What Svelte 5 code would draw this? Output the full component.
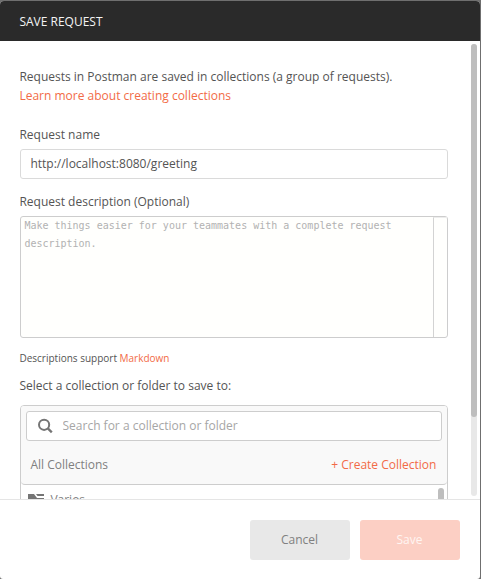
<script>
  let name = $state('http://localhost:8080/greeting');
  let search = $state('');
</script>

<div class="backdrop">
  <div class="modal">
    <header>SAVE REQUEST</header>
    <div class="body">
      <div class="content">
        <p class="intro">Requests in Postman are saved in collections (a group of requests).<br /><span class="link">Learn more about creating collections</span></p>
        <label for="name" class="label">Request name</label>
        <input id="name" class="name" bind:value={name} />
        <div class="label desc-label">Request description (Optional)</div>
        <div class="editor">
          <div class="editor-text">Make things easier for your teammates with a complete request description.</div>
          <div class="gutter"></div>
        </div>
        <p class="hint">Descriptions support <span class="link">Markdown</span></p>
        <div class="label select-label">Select a collection or folder to save to:</div>
        <div class="picker">
          <div class="picker-head">
            <div class="search">
              <svg width="16" height="16" viewBox="0 0 16 16" fill="none" stroke="#757575" stroke-width="2"><circle cx="6.1" cy="6.8" r="5.1" /><path d="M9.8 10.4 13.8 14.4" stroke-width="2.3" /></svg>
              <input placeholder="Search for a collection or folder" bind:value={search} />
            </div>
            <div class="row">
              <span>All Collections</span>
              <span class="link">+ Create Collection</span>
            </div>
          </div>
          <div class="list">
            <svg width="16" height="12" viewBox="0 0 16 12" fill="#757575"><path d="M0 0H6L9 4H16V12H0Z" /><path d="M8 0H16V2H9.5Z" /></svg>
            <span>Varios</span>
            <div class="list-thumb"></div>
          </div>
        </div>
      </div>
      <div class="track"><div class="thumb"></div></div>
    </div>
    <footer>
      <button class="cancel">Cancel</button>
      <button class="save">Save</button>
    </footer>
  </div>
</div>

<style>
  :global(body) {
    margin: 0;
  }
  .backdrop {
    box-sizing: border-box;
    width: 481px;
    height: 579px;
    padding: 1px 1px 0 0;
    background: #6f6f6f;
    overflow: hidden;
    font: 12px/19px "Open Sans", "Noto Sans", sans-serif;
    color: #545454;
  }
  .modal {
    height: 578px;
    display: flex;
    flex-direction: column;
    background: #fff;
    border-radius: 4px 4px 3px 3px;
    overflow: hidden;
  }
  header {
    height: 40px;
    line-height: 41px;
    flex: none;
    padding-left: 19.4px;
    background: #2a2a2a;
    color: #f4f4f4;
  }
  .body {
    height: 458px;
    flex: none;
    display: flex;
    overflow: hidden;
  }
  .content {
    width: 428px;
    flex: none;
    padding: 26px 23px 0 20px;
  }
  p {
    margin: 0 0 0 -0.6px;
  }
  .link {
    color: #f26b47;
  }
  .label {
    display: block;
    margin-top: 20px;
    margin-left: -0.6px;
    height: 19px;
  }
  input {
    font: inherit;
    color: inherit;
    outline: none;
    box-sizing: border-box;
  }
  .name {
    display: block;
    width: 428px;
    height: 30px;
    margin-top: 5px;
    padding: 0 9.4px 1px;
    border: 1px solid #dadada;
    border-radius: 3px;
  }
  .desc-label {
    margin-top: 13px;
  }
  .editor {
    box-sizing: border-box;
    height: 122px;
    margin-top: 5px;
    display: flex;
    border: 1px solid #cdcdcd;
    border-radius: 3px;
    background: #fffffd;
  }
  .editor-text {
    flex: 1;
    padding: 0 4px 0 3.4px;
    font: 10px/18px "DejaVu Sans Mono", monospace;
    color: #b2b2b2;
  }
  .gutter {
    box-sizing: border-box;
    width: 14px;
    border-left: 1px solid #d3d3d3;
    border-top: 1px solid #ededed;
  }
  .hint {
    margin-top: 11px;
    font-size: 10px;
  }
  .select-label {
    margin-top: 8px;
  }
  .picker {
    box-sizing: border-box;
    height: 180px;
    margin-top: 10px;
    border: 1px solid #cdcdcd;
    border-radius: 4px;
    overflow: hidden;
  }
  .picker-head {
    box-sizing: border-box;
    height: 79px;
    padding: 5px;
    background: #f9f9f9;
    border-bottom: 1px solid #cdcdcd;
    border-radius: 0 0 4px 4px;
  }
  .search {
    box-sizing: border-box;
    height: 30px;
    display: flex;
    align-items: center;
    padding-left: 11px;
    background: #fff;
    border: 1px solid #cdcdcd;
    border-radius: 3px;
  }
  .search input {
    flex: 1;
    margin-left: 8.5px;
    padding: 0 0 1px;
    border: 0;
    background: none;
  }
  .search input::placeholder {
    color: #a6a6a6;
    opacity: 1;
  }
  .row {
    display: flex;
    justify-content: space-between;
    margin-top: 14px;
    padding: 0 5.6px 0 4.4px;
    color: #808080;
  }
  .list {
    display: flex;
    align-items: flex-start;
    padding: 5px 3px 0 7px;
    color: #808080;
  }
  .list svg {
    margin-top: 4px;
  }
  .list span {
    flex: 1;
    margin-left: 6.4px;
  }
  .list-thumb {
    width: 6px;
    height: 50px;
    margin-top: -2px;
    border-radius: 3px;
    background: #bebebe;
  }
  .track {
    width: 6px;
    height: 452px;
    margin-top: 3px;
    border-radius: 3px;
    background: #e8e8e8;
  }
  .thumb {
    height: 373px;
    border-radius: 3px;
    background: #bebebe;
  }
  footer {
    flex: 1;
    display: flex;
    justify-content: flex-end;
    align-items: flex-start;
    gap: 10px;
    padding: 20px 20px 0;
    border-top: 1px solid #e5e5e5;
  }
  button {
    width: 100px;
    height: 40px;
    padding: 0 1px 2px 0;
    border: 0;
    border-radius: 3px;
    font: inherit;
  }
  .cancel {
    background: #e8e8e8;
    color: #808080;
  }
  .save {
    background: #fccfc4;
    color: #fff5f2;
  }
</style>
